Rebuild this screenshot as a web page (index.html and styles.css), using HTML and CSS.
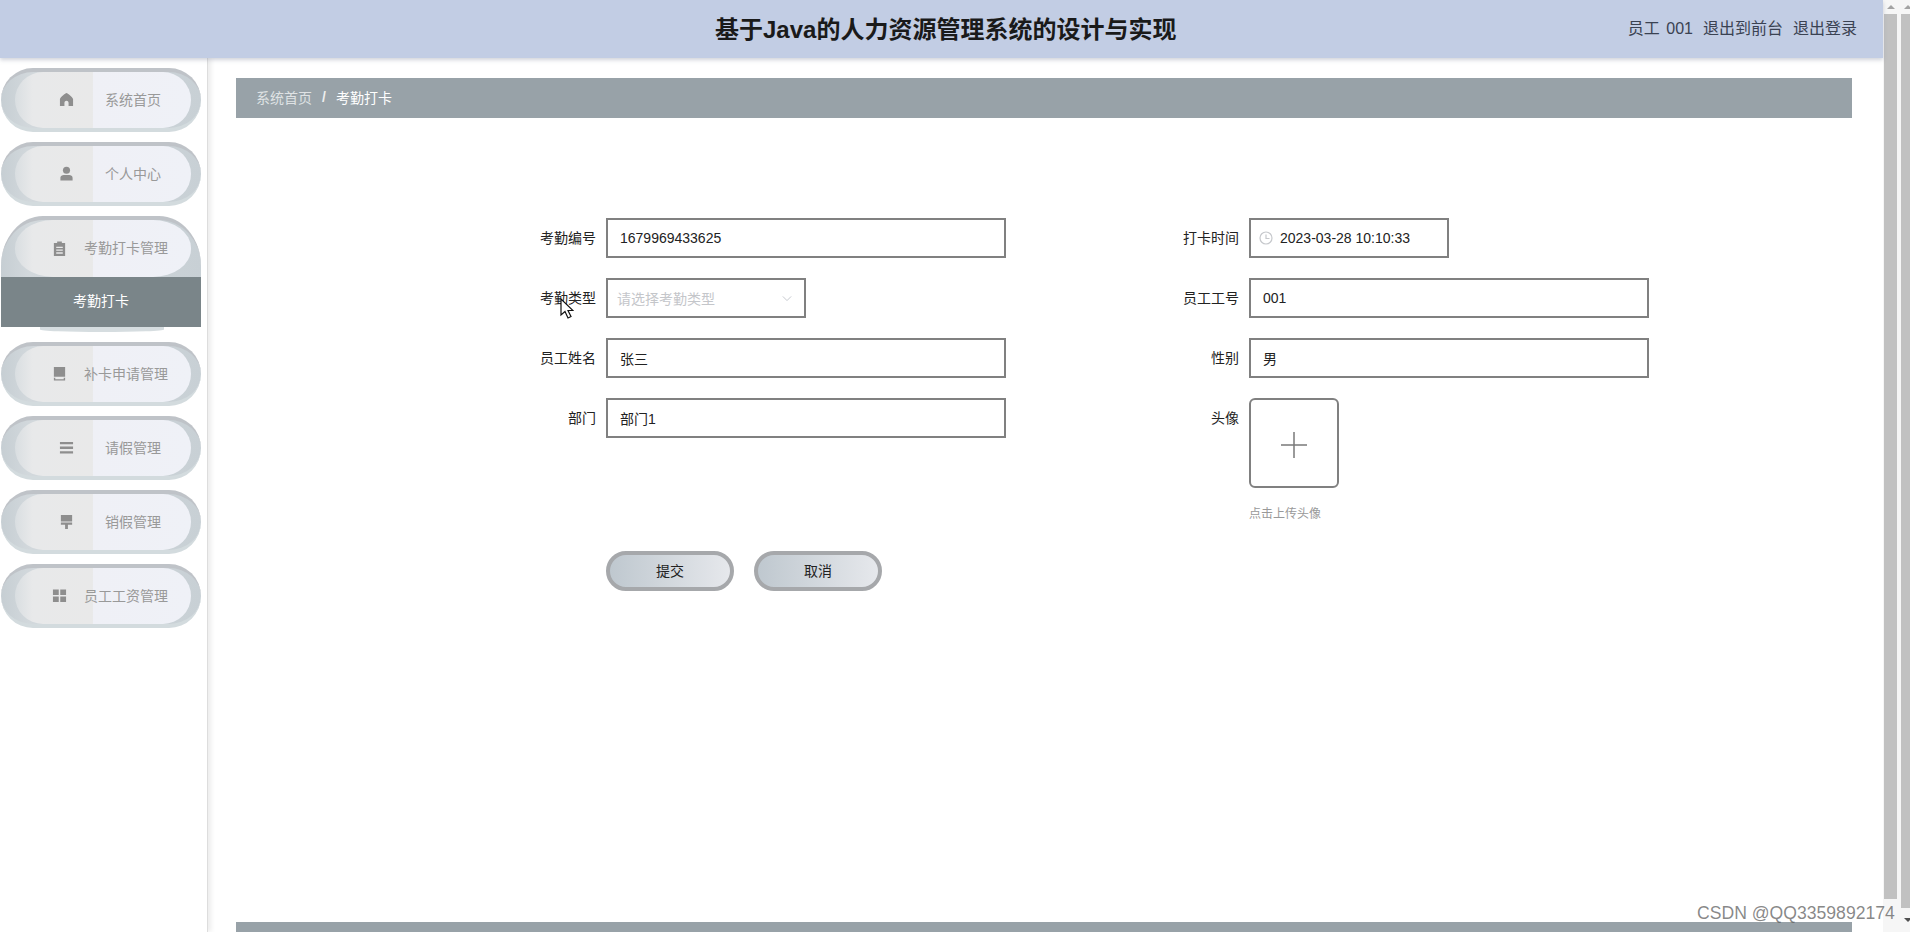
FILE: index.html
```html
<!DOCTYPE html>
<html lang="zh">
<head>
  <meta charset="UTF-8" />
  <title>基于Java的人力资源管理系统的设计与实现</title>
  <link rel="stylesheet" href="styles.css">
</head>
<body>
  <div class="page">
    <div class="left">
      <div class="header">
        <div class="title">基于Java的人力资源管理系统的设计与实现</div>
        <div class="user">
          <span class="user-name">员工 001</span>
          <span>退出到前台</span>
          <span>退出登录</span>
        </div>
      </div>
      <div class="main">
        <div class="sidebar">
          <div class="menu-item">
            <div class="pill">
              <svg class="icon" viewBox="0 0 16 16"><path fill-rule="evenodd" d="M8 1C9 1 15 6 15 7.500V15H1V7.500C1 6 7 1 8 1zM5.800 15V11.500C5.800 8.500 10.200 8.500 10.200 11.500V15z"/></svg>
              <span>系统首页</span>
            </div>
          </div>
          <div class="menu-item">
            <div class="pill">
              <svg class="icon" viewBox="0 0 16 16"><circle cx="8" cy="4.500" r="3.800"/><path d="M1.500 15.500v-3c0-2 2-3 3.500-3h6c1.500 0 3.500 1 3.500 3v3z"/></svg>
              <span>个人中心</span>
            </div>
          </div>
          <div class="menu-item open">
            <div class="pill long">
              <svg class="icon" viewBox="0 0 16 16"><path fill-rule="evenodd" d="M2 2h3.500V.5h5V2H14v15H2zM4.500 6v1.500h7V6zm0 3v1.500h7V9zm0 3v1.500h7V12z"/></svg>
              <span>考勤打卡管理</span>
            </div>
            <div class="submenu">考勤打卡</div>
          </div>
          <div class="menu-item">
            <div class="pill long">
              <svg class="icon" viewBox="0 0 16 16"><path d="M2 1h12v10.500H2zM2 12.500h1.500V14h9v-1.500H14V15.500H2z"/></svg>
              <span>补卡申请管理</span>
            </div>
          </div>
          <div class="menu-item">
            <div class="pill">
              <svg class="icon" viewBox="0 0 16 16"><path d="M1 2h14v2.500H1zM1 7h14v2.500H1zM1 12h14v2.500H1z"/></svg>
              <span>请假管理</span>
            </div>
          </div>
          <div class="menu-item">
            <div class="pill">
              <svg class="icon" viewBox="0 0 16 16"><path d="M2 1h12v7H2zM2 9h12v2.500H9.500V16h-3V11.500H2z"/></svg>
              <span>销假管理</span>
            </div>
          </div>
          <div class="menu-item">
            <div class="pill long">
              <svg class="icon" viewBox="0 0 16 16"><path d="M1 1.500h6.200v6H1zM8.800 1.500H15v6H8.800zM1 9h6.200v6H1zM8.800 9H15v6H8.800z"/></svg>
              <span>员工工资管理</span>
            </div>
          </div>
        </div>
        <div class="content">
          <div class="breadcrumb"><span class="crumb">系统首页</span><span class="sep">/</span><span class="crumb-now">考勤打卡</span></div>
          <div class="form">
            <div class="form-col">
              <div class="row"><label>考勤编号</label><div class="input">1679969433625</div></div>
              <div class="row">
                <label>考勤类型</label>
                <div class="input short select"><span class="placeholder">请选择考勤类型</span>
                  <svg class="arrow" viewBox="0 0 12 8"><path d="M1 1.500 6 6.500 11 1.500"/></svg>
                </div>
              </div>
              <div class="row"><label>员工姓名</label><div class="input">张三</div></div>
              <div class="row"><label>部门</label><div class="input">部门1</div></div>
            </div>
            <div class="form-col">
              <div class="row">
                <label>打卡时间</label>
                <div class="input short date">
                  <svg class="clock" viewBox="0 0 14 14"><circle cx="7" cy="7" r="6"/><path d="M7 3.500V7.500H10.500"/></svg>
                  <span>2023-03-28 10:10:33</span>
                </div>
              </div>
              <div class="row"><label>员工工号</label><div class="input">001</div></div>
              <div class="row"><label>性别</label><div class="input">男</div></div>
              <div class="row upload-row">
                <label>头像</label>
                <div>
                  <div class="upload"><svg viewBox="0 0 28 28"><path d="M14 1V27M1 14H27"/></svg></div>
                  <div class="tip">点击上传头像</div>
                </div>
              </div>
            </div>
          </div>
          <div class="buttons">
            <div class="btn">提交</div>
            <div class="btn">取消</div>
          </div>
          <div class="foot-bar"></div>
        </div>
      </div>
    </div>
    <div class="scroll inner-scroll">
      <div class="sb-arrow"><i class="up"></i></div>
      <div class="sb-thumb"></div>
    </div>
    <div class="scroll outer-scroll">
      <div class="sb-arrow"><i class="up"></i></div>
      <div class="sb-thumb"></div>
      <div class="sb-arrow bottom"><i class="down"></i></div>
    </div>
  </div>
  <svg class="cursor" viewBox="0 0 14 22"><path d="M1 1V17L5 13.500 8 20 11 18.500 8 12.500H13z"/></svg>
  <div class="watermark">CSDN @QQ3359892174</div>
</body>
</html>
```

FILE: styles.css
```css
* {
  box-sizing: border-box;
}
html, body {
  margin: 0;
  height: 100%;
  overflow: hidden;
}
body {
  font-family: "Liberation Sans", "Noto Sans CJK SC", sans-serif;
  font-size: 14px;
  color: #333;
  background: #fff;
}
.page {
  display: flex;
  height: 932px;
}
.left {
  width: 1883px;
  flex: none;
  display: flex;
  flex-direction: column;
}
.header {
  height: 58px;
  flex: none;
  padding: 0 26px 4px 0;
  background: #c2cde4;
  box-shadow: 0 2px 4px rgba(120, 130, 150, .35);
  display: flex;
  align-items: center;
  position: relative;
  z-index: 2;
}
.title {
  font-size: 24px;
  font-weight: bold;
  color: #1a1a1a;
  margin-left: 715px;
  white-space: nowrap;
}
.user {
  margin-left: auto;
  display: flex;
  gap: 10px;
  font-size: 16px;
  color: #3a4252;
}
.user-name {
  word-spacing: 2px;
}
.main {
  flex: 1;
  display: flex;
  min-height: 0;
}
.sidebar {
  width: 208px;
  flex: none;
  padding-top: 10px;
  border-right: 1px solid #ddd;
  box-shadow: 3px 0 5px rgba(0, 0, 0, .08);
}
.menu-item {
  width: 200px;
  margin: 0 0 10px 1px;
}
.pill {
  position: relative;
  height: 64px;
  border-radius: 32px;
  background: linear-gradient(90deg, #c6ced3, #d2d8dc 14%, #c8d0d5 100%);
  border-top: 4px solid #bfc3c8;
  border-bottom: 4px solid #d3dbde;
  display: flex;
  align-items: center;
  overflow: hidden;
  color: #999;
  z-index: 0;
}
.pill::before {
  content: "";
  position: absolute;
  left: 14px;
  right: 10px;
  top: 0;
  bottom: 0;
  border-radius: 28px;
  background: linear-gradient(90deg, #d9dee1 0, #e8e9ea 10%, #e9e9e9 44%, #eff0f6 44.500%, #eff1f7 100%);
  z-index: -1;
}
.pill span {
  font-size: 14px;
  margin: 0 0 3px 31px;
  white-space: nowrap;
}
.icon {
  width: 15px;
  height: 15px;
  margin: 0 0 1px 58px;
  fill: #8e8e8e;
  flex: none;
}
.long .icon {
  margin-left: 51px;
}
.long span {
  margin-left: 17px;
}
.open {
  height: 116px;
  position: relative;
}
.open::after {
  content: "";
  position: absolute;
  left: 39px;
  bottom: 0;
  width: 124px;
  height: 5px;
  background: #d6dde0;
  border-radius: 0 0 50% 50%;
}
.open .pill {
  border-radius: 42px 42px 0 0 / 50px 50px 0 0;
  height: 61px;
  border-bottom: 0;
}
.open .pill::before {
  border-radius: 38px / 28px;
}
.open .submenu {
  height: 50px;
  padding-bottom: 2px;
  background: #7a8589;
  color: #fff;
  text-align: center;
  line-height: 48px;
  font-size: 14px;
}
.content {
  flex: 1;
  min-width: 0;
  padding: 20px 0 0 28px;
  display: flex;
  flex-direction: column;
}
.breadcrumb {
  width: 1616px;
  height: 40px;
  flex: none;
  background: #98a2a8;
  padding: 0 0 2px 20px;
  display: flex;
  align-items: center;
  color: #fff;
  font-size: 14px;
}
.crumb {
  color: #dfe2e4;
}
.sep {
  margin: 0 10px;
  color: #eee;
  font-weight: bold;
}
.crumb-now {
  color: #fff;
}
.form {
  display: flex;
  margin-top: 100px;
  padding-left: 279px;
  gap: 152px;
}
.form-col {
  width: 491px;
  display: flex;
  flex-direction: column;
  gap: 20px;
}
.row {
  display: flex;
  height: 40px;
  align-items: center;
}
.row label {
  width: 81px;
  flex: none;
  margin-bottom: 2px;
  text-align: right;
  color: #222;
  font-size: 14px;
}
.input {
  width: 400px;
  height: 40px;
  margin-left: 10px;
  border: 2px solid #808080;
  display: flex;
  align-items: center;
  padding-left: 12px;
  font-size: 14px;
  color: #222;
}
.input.short {
  width: 200px;
}
.select {
  justify-content: space-between;
  padding: 0 12px 0 9px;
}
.placeholder {
  color: #c4c6ca;
}
.arrow {
  width: 10px;
  height: 7px;
  fill: none;
  stroke: #c6c9cf;
  stroke-width: 1.200;
}
.input.date {
  padding-left: 8px;
}
.clock {
  width: 14px;
  height: 14px;
  margin-right: 7px;
  fill: none;
  stroke: #c6c8cc;
  stroke-width: 1.200;
}
.upload-row {
  align-items: flex-start;
  height: auto;
}
.upload-row label {
  padding-top: 9px;
}
.upload {
  width: 90px;
  height: 90px;
  margin-left: 10px;
  padding-top: 4px;
  border: 2px solid #808080;
  border-radius: 6px;
  display: flex;
  align-items: center;
  justify-content: center;
}
.upload svg {
  width: 28px;
  height: 28px;
  fill: none;
  stroke: #7a7a7a;
  stroke-width: 1.500;
}
.tip {
  font-size: 12px;
  line-height: 16px;
  color: #999;
  margin: 18px 0 0 10px;
}
.buttons {
  margin: 29px 0 0 370px;
  display: flex;
  gap: 20px;
}
.btn {
  width: 128px;
  height: 40px;
  padding-bottom: 2px;
  border: 4px solid #a6a8ab;
  border-radius: 20px;
  background: linear-gradient(90deg, #bfc8cf, #e6e8ec);
  display: flex;
  align-items: center;
  justify-content: center;
  color: #222;
  font-size: 14px;
}
.foot-bar {
  width: 1616px;
  height: 10px;
  flex: none;
  margin-top: auto;
  background: #98a2a8;
}
.scroll {
  display: flex;
  flex-direction: column;
  background: #f6f6f6;
}
.inner-scroll {
  width: 17px;
  flex: none;
  padding: 0 3px 33px 1px;
}
.outer-scroll {
  width: 10px;
  flex: none;
  overflow: hidden;
  padding-left: 1px;
}
.sb-arrow {
  height: 14px;
  width: 13px;
  flex: none;
  display: flex;
  align-items: center;
  justify-content: center;
}
.sb-arrow.bottom {
  height: 24px;
}
.sb-thumb {
  flex: 1;
  width: 13px;
  background: #c1c1c1;
}
.outer-scroll .sb-thumb {
  width: 9px;
}
.sb-arrow .up {
  border: 4px solid transparent;
  border-top: 0;
  border-bottom: 4px solid #a3a3a3;
}
.sb-arrow .down {
  border: 4px solid transparent;
  border-bottom: 0;
  border-top: 4px solid #505050;
}
.cursor {
  position: absolute;
  left: 560px;
  top: 298px;
  width: 14px;
  height: 22px;
  fill: #fff;
  stroke: #111;
  stroke-width: 1.200;
  z-index: 5;
}
.watermark {
  position: absolute;
  left: 1697px;
  top: 903px;
  font-size: 17.600px;
  color: rgba(90, 90, 90, .72);
  z-index: 6;
  white-space: nowrap;
}
```
